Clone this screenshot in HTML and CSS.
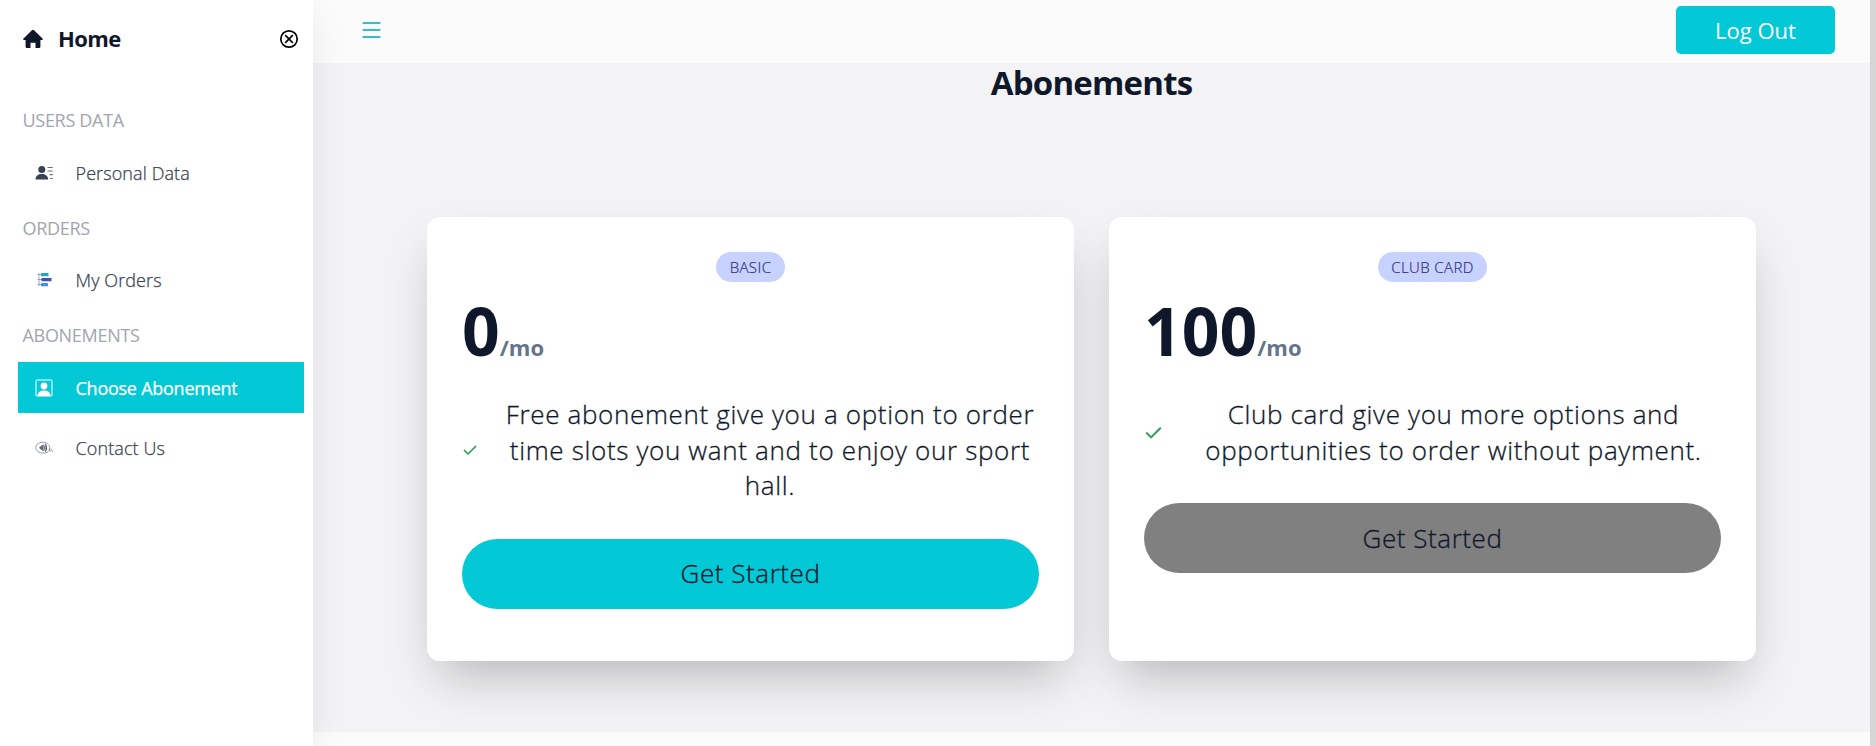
FILE: index.html
```html
<!DOCTYPE html>
<html lang="en">
<head>
<meta charset="utf-8">
<title>Abonements</title>
<link rel="stylesheet" href="styles.css">
</head>
<body>
<div class="app">
  <aside class="sidebar">
    <div class="brand">
      <svg class="home" viewBox="0 0 20 20" fill="currentColor"><path d="M8.900 1.300a1.500 1.500 0 0 1 2.200 0l8.400 8.200c.6.600.3 1.500-.5 1.500h-1.600v6.400c0 1-.6 1.600-1.600 1.600h-3.300v-5.300H7.500V19H4.200c-1 0-1.600-.6-1.600-1.600V11H1c-.8 0-1.100-.9-.5-1.500z"/></svg>
      <span class="brand-name">Home</span>
      <svg class="close" viewBox="0 0 20 20" fill="none" stroke="currentColor" stroke-width="1.700"><circle cx="10" cy="10" r="8.200"/><path d="M6.200 6.200l7.600 7.600M13.800 6.200l-7.600 7.600"/></svg>
    </div>
    <nav class="nav">
      <p class="section">USERS DATA</p>
      <a class="item"><svg class="icon" viewBox="0 0 18 18"><g fill="#374151"><circle cx="6.800" cy="5.500" r="3.500"/><path d="M.5 15.500c0-3.600 2.800-5.500 6.300-5.500s6.300 1.900 6.300 5.500z"/></g><path d="M12.500 3.500h5.300M12.500 7h5.300M14.500 10.700h3.300M15 14.500h2.800" stroke="#6b7280" stroke-width="1.200"/></svg><span>Personal Data</span></a>
      <p class="section">ORDERS</p>
      <a class="item"><svg class="icon" viewBox="0 0 18 18"><path d="M4 2v13M2.500 3.500h5M2.500 8.500h5M2.500 13.500h5" stroke="#8794a8" stroke-width=".8" fill="none"/><rect x="6" y="2" width="7.500" height="3.300" rx=".6" fill="#1cacbf"/><rect x="6.500" y="6.900" width="10" height="3.400" rx=".6" fill="#3f51b5"/><rect x="6" y="12" width="7" height="3.300" rx=".6" fill="#448aff"/></svg><span>My Orders</span></a>
      <p class="section">ABONEMENTS</p>
      <a class="item active"><svg class="icon" viewBox="0 0 18 18"><rect x="1" y="1" width="16" height="16" rx="1" fill="none" stroke="#fff" stroke-width="1"/><circle cx="9" cy="7" r="3.400" fill="#fff"/><path d="M2.500 17c.3-4 2.900-5.500 6.500-5.500s6.200 1.500 6.500 5.500z" fill="#fff"/></svg><span>Choose Abonement</span></a>
      <a class="item"><svg class="icon" viewBox="0 0 18 18" fill="none" stroke="#6b7280" stroke-width=".7"><path d="M12.500 4.500C10.500 2.900 6.500 2.700 3.500 4.300.2 6.200-.1 10.500 3 12.700c2.700 1.800 7.200 2 10 .3"/><path d="M4.500 8.800l3-2.500v5zM8.500 5.500c1.300 1.600 1.300 5 0 6.700M10.300 4.500c1.700 2.400 1.700 6.500 0 8.700" fill="#6b7280" stroke="#374151"/><path d="M12.500 5c2.700 1.700 3 5.300.8 7.500M14 9.500l1.200 3.500M16 9.800l1.600 3"/></svg><span>Contact Us</span></a>
    </nav>
  </aside>
  <div class="page">
    <header class="topbar">
      <svg class="menu" viewBox="0 0 18 18" stroke="currentColor" stroke-width="1.800" stroke-linecap="round"><path d="M.8 2h16.400M.8 9h16.400M.8 16h16.400"/></svg>
      <button class="logout">Log Out</button>
    </header>
    <main class="content">
      <h1 class="title">Abonements</h1>
      <div class="cards">
        <section class="card">
          <span class="badge">BASIC</span>
          <p class="price">0<span class="per">/mo</span></p>
          <div class="feature">
            <svg class="check small" viewBox="0 0 14 14"><path d="M1.500 7.500l3.500 3.500L12.500 3.500"/></svg>
            <p class="text">Free abonement give you a option to order time slots you want and to enjoy our sport hall.</p>
          </div>
          <button class="start">Get Started</button>
        </section>
        <section class="card">
          <span class="badge">CLUB CARD</span>
          <p class="price">100<span class="per">/mo</span></p>
          <div class="feature">
            <svg class="check" viewBox="0 0 14 14"><path d="M1.500 7.500l3.500 3.500L12.500 3.500"/></svg>
            <p class="text">Club card give you more options and opportunities to order without payment.</p>
          </div>
          <button class="start disabled">Get Started</button>
        </section>
      </div>
    </main>
  </div>
  <div class="scrollbar"></div>
</div>
</body>
</html>
```
FILE: styles.css
```css
* { box-sizing: border-box; margin: 0; padding: 0; }
body { font-family: "Open Sans", "Noto Sans", sans-serif; font-size: 18px; color: #0f172a; overflow: hidden; }
button { font: inherit; border: 0; }
svg { display: block; flex: none; }
.app { display: flex; height: 746px; background: #fbfbfb; overflow: hidden; }
.sidebar { width: 313px; flex: none; background: #fff; box-shadow: 0 10px 40px -6px rgba(0, 0, 0, .1); position: relative; z-index: 2; padding: 0 9px 0 18px; }
.brand { display: flex; align-items: center; height: 78px; padding: 0 5px; }
.home { width: 20px; height: 20px; }
.brand-name { font-size: 22px; line-height: 28px; padding-bottom: 2px; font-weight: 700; letter-spacing: -.6px; margin-left: 15px; flex: 1; }
.close { width: 20px; height: 20px; color: #000; }
.nav { padding-top: 23px; }
.section { height: 37px; line-height: 39px; margin-bottom: 9px; padding-left: 4.500px; font-weight: 400; color: #a0a5ae; font-size: 18px; letter-spacing: -.3px; }
.item { display: flex; align-items: center; height: 51px; margin-bottom: 10.500px; padding-left: 17px; font-weight: 300; color: #374151; font-size: 18px; letter-spacing: .1px; -webkit-text-stroke: .25px currentColor; }
.icon { width: 18px; height: 18px; margin-right: 22.500px; }
.active { background: #03c9d7; color: #fff; font-weight: 400; letter-spacing: -.25px; margin-bottom: 9px; }
.page { flex: 1; min-width: 0; }
.topbar { height: 63px; display: flex; justify-content: space-between; align-items: flex-start; padding: 6px 35px 0 49px; }
.menu { width: 19px; height: 18px; color: #35bfcb; margin-top: 15px; }
.logout { width: 159px; height: 48px; border-radius: 5px; background: #03c9d7; color: #fff; font-size: 22px; }
.content { height: 669px; background: #f3f3f5; padding: 0 114px; }
.title { text-align: center; font-size: 33px; line-height: 40px; font-weight: 700; letter-spacing: -.8px; height: 154px; }
.cards { display: grid; grid-template-columns: 1fr 1fr; gap: 35px; height: 444px; }
.card { background: #fff; border-radius: 13px; padding: 35px; display: flex; flex-direction: column; box-shadow: 0 25px 50px -12px rgba(0, 0, 0, .25); }
.badge { align-self: center; height: 30px; line-height: 30px; border-radius: 15px; background: #c7d2fe; color: #312e81; padding: 0 13.500px; font-size: 15px; font-weight: 300; letter-spacing: .4px; -webkit-text-stroke: .2px currentColor; }
.price { margin-top: 15px; height: 66px; line-height: 66px; font-size: 66px; font-weight: 700; white-space: nowrap; }
.per { font-size: 22px; color: #64748b; }
.feature { display: flex; align-items: center; margin-top: 34px; }
.check { width: 17px; height: 17px; margin-left: 1px; margin-right: 24px; fill: none; stroke: #2f9e5b; stroke-width: 1.700; stroke-linecap: round; stroke-linejoin: round; }
.small { width: 14px; height: 14px; }
.text { flex: 1; text-align: center; font-size: 26px; line-height: 35.500px; font-weight: 300; letter-spacing: .66px; -webkit-text-stroke: .3px currentColor; }
.start { margin-top: 35px; height: 70px; flex: none; border-radius: 35px; background: #03c9d7; color: #0f172a; font-size: 26px; font-weight: 300; letter-spacing: .55px; padding-bottom: 1px; -webkit-text-stroke: .3px currentColor; }
.disabled { background: #808080; }
.scrollbar { width: 6px; flex: none; background: #d5d5d5; }
```
